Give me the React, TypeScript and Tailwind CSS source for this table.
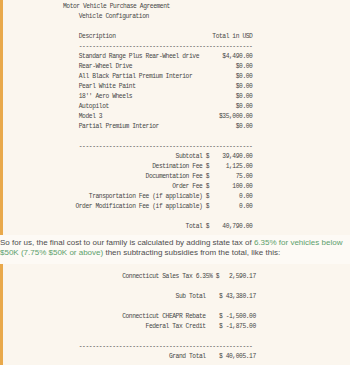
import React from "react";

const mono =
  "font-['Liberation_Mono',monospace] text-[6.3px] tracking-[-0.44px] leading-[10px] text-[#474747] whitespace-pre";

const W1 = 53;
const item = (name: string, amt: string) =>
  " " + name + " ".repeat(Math.max(1, W1 - 1 - name.length - amt.length)) + amt;
const fee = (label: string, amt: string) =>
  label.padStart(38) + " $" + amt.padStart(13);

const block1: string[] = [
  " Vehicle Configuration",
  "",
  item("Description", "Total in USD"),
  " " + "-".repeat(52),
  item("Standard Range Plus Rear-Wheel drive", "$4,490.00"),
  item("Rear-Wheel Drive", "$0.00"),
  item("All Black Partial Premium Interior", "$0.00"),
  item("Pearl White Paint", "$0.00"),
  item("18'' Aero Wheels", "$0.00"),
  item("Autopilot", "$0.00"),
  item("Model 3", "$35,000.00"),
  item("Partial Premium Interior", "$0.00"),
  "",
  " " + "-".repeat(52),
  fee("Subtotal", "39,490.00"),
  fee("Destination Fee", "1,125.00"),
  fee("Documentation Fee", "75.00"),
  fee("Order Fee", "100.00"),
  fee("Transportation Fee (if applicable)", "0.00"),
  fee("Order Modification Fee (if applicable)", "0.00"),
  "",
  fee("Total", "40,790.00"),
];

const fee2 = (label: string, amt: string) =>
  label.padStart(39) + "    $ " + amt.padStart(9);

const block2: string[] = [
  " ".repeat(14) + "Connecticut Sales Tax 6.35% $" + "2,590.17".padStart(11),
  "",
  fee2("Sub Total", "43,380.17"),
  "",
  fee2("Connecticut CHEAPR Rebate", "-1,500.00"),
  fee2("Federal Tax Credit", "-1,875.00"),
  "",
  " " + "-".repeat(52),
  fee2("Grand Total", "40,005.17"),
];

function Code({ lines, first, className }: { lines: string[]; first?: string; className: string }) {
  return (
    <div className={`border-l-[3px] border-[#e9a94b] bg-[#fbf6ee] ${className}`}>
      <div className={`${mono} pl-[72.44px]`}>
        {first !== undefined && <div className="-ml-[12.44px]">{first}</div>}
        {lines.map((l, i) => (
          <div key={i}>{l === "" ? " " : l}</div>
        ))}
      </div>
    </div>
  );
}

export default function App() {
  return (
    <div className="w-[350px] h-[365px] overflow-hidden bg-[#fdfaf5]">
      <Code lines={block1} first="Motor Vehicle Purchase Agreement" className="pt-[2px] pb-[3px]" />
      <p className="font-['Liberation_Sans',Arial,sans-serif] text-[8px] leading-[10px] text-[#4d4d4d] pt-[3px] pb-[6px]">
        So for us, the final cost to our family is calculated by adding state tax of{" "}
        <span className="text-[#5c9f6c]">6.35% for vehicles below $50K (7.75% $50K or above)</span> then
        subtracting subsidies from the total, like this:
      </p>
      <Code lines={block2} className="pt-[8px] pb-[8px]" />
    </div>
  );
}
